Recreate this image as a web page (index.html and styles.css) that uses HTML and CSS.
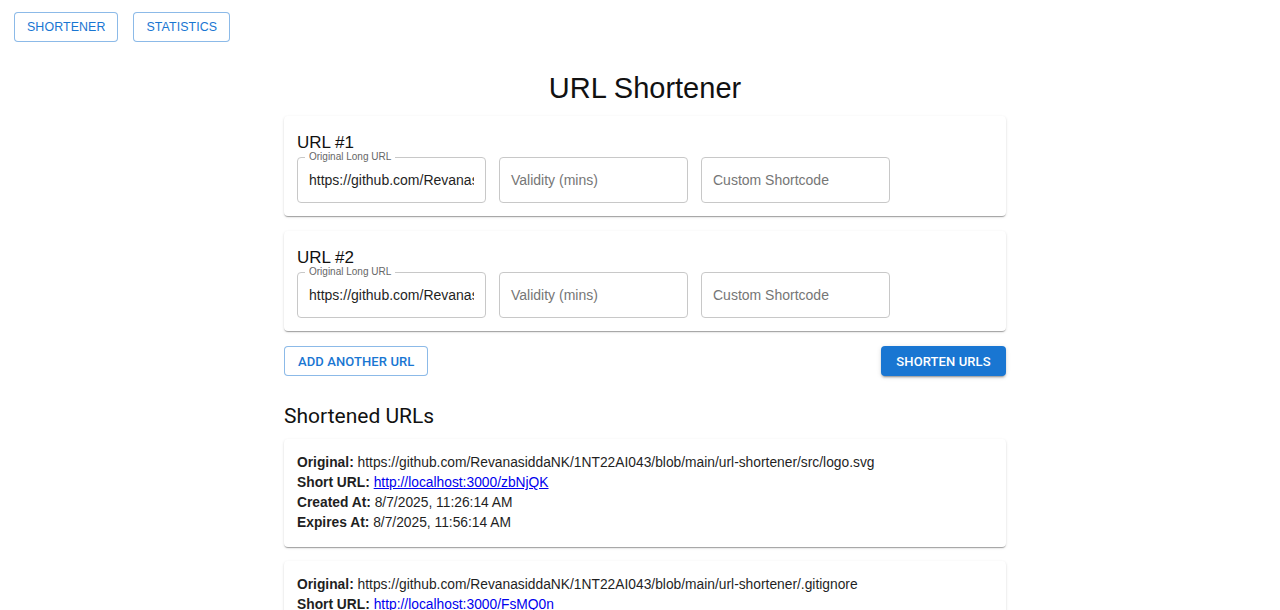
FILE: index.html
```html
<!DOCTYPE html>
<html lang="en">
<head>
<meta charset="utf-8">
<title>URL Shortener</title>
<link rel="stylesheet" href="styles.css">
</head>
<body>
<nav class="nav">
  <button class="btn btn-outline nav-btn">Shortener</button>
  <button class="btn btn-outline nav-btn">Statistics</button>
</nav>
<main class="container">
  <h1 class="title">URL Shortener</h1>

  <section class="card entry">
    <h2 class="entry-title">URL #1</h2>
    <div class="fields">
      <div class="field filled">
        <span class="field-label">Original Long URL</span>
        <span class="field-value">https://github.com/RevanasiddaNK/1NT22AI043/blob/main/url-shortener/src/logo.svg</span>
      </div>
      <div class="field"><span class="field-placeholder">Validity (mins)</span></div>
      <div class="field"><span class="field-placeholder">Custom Shortcode</span></div>
    </div>
  </section>

  <section class="card entry">
    <h2 class="entry-title">URL #2</h2>
    <div class="fields">
      <div class="field filled">
        <span class="field-label">Original Long URL</span>
        <span class="field-value">https://github.com/RevanasiddaNK/1NT22AI043/blob/main/url-shortener/.gitignore</span>
      </div>
      <div class="field"><span class="field-placeholder">Validity (mins)</span></div>
      <div class="field"><span class="field-placeholder">Custom Shortcode</span></div>
    </div>
  </section>

  <div class="actions">
    <button class="btn btn-outline add-btn">Add another URL</button>
    <button class="btn btn-filled">Shorten URLs</button>
  </div>

  <h2 class="results-title">Shortened URLs</h2>

  <section class="card result">
    <p><b>Original:</b> https://github.com/RevanasiddaNK/1NT22AI043/blob/main/url-shortener/src/logo.svg</p>
    <p><b>Short URL:</b> <a href="#">http://localhost:3000/zbNjQK</a></p>
    <p><b>Created At:</b> 8/7/2025, 11:26:14 AM</p>
    <p><b>Expires At:</b> 8/7/2025, 11:56:14 AM</p>
  </section>

  <section class="card result">
    <p><b>Original:</b> https://github.com/RevanasiddaNK/1NT22AI043/blob/main/url-shortener/.gitignore</p>
    <p><b>Short URL:</b> <a href="#">http://localhost:3000/FsMQ0n</a></p>
    <p><b>Created At:</b> 8/7/2025, 11:26:14 AM</p>
    <p><b>Expires At:</b> 8/7/2025, 11:56:14 AM</p>
  </section>
</main>
</body>
</html>
```

FILE: styles.css
```css
* { box-sizing: border-box; }

html, body {
  margin: 0;
  padding: 0;
  background: #ffffff;
  color: #1f1f1f;
  font-family: "Liberation Sans", Arial, sans-serif;
}

.nav {
  display: flex;
  gap: 15px;
  padding: 12px 14px 0;
}

.btn {
  height: 30px;
  border-radius: 4px;
  font-size: 13px;
  text-transform: uppercase;
  cursor: pointer;
  background: #fff;
  display: inline-flex;
  align-items: center;
  justify-content: center;
}

.btn-outline {
  border: 1px solid rgba(25, 118, 210, 0.5);
  color: #1976d2;
}

.nav-btn {
  font-family: "Liberation Sans", Arial, sans-serif;
  font-size: 12.4px;
  padding: 0 12px;
  letter-spacing: 0.1px;
}

.container {
  width: 722px;
  margin-left: 284px;
}

.title {
  margin: 29px 0 11px;
  text-align: center;
  font-size: 29px;
  line-height: 34px;
  font-weight: 400;
  color: #111;
}

.card {
  background: #fff;
  border-radius: 4px;
  box-shadow: 0 2px 1px -1px rgba(0,0,0,0.2), 0 1px 1px 0 rgba(0,0,0,0.14), 0 1px 3px 0 rgba(0,0,0,0.12);
}

.entry {
  padding: 16px 13px 13px;
  margin-bottom: 15px;
}

.entry-title {
  margin: 0 0 3px;
  font-size: 17px;
  line-height: 22px;
  font-weight: 400;
  color: #111;
}

.fields {
  display: flex;
  gap: 13px;
}

.field {
  position: relative;
  width: 189px;
  height: 46px;
  border: 1px solid #c8c8c8;
  border-radius: 4px;
  padding: 0 11px;
  display: flex;
  align-items: center;
  font-size: 14px;
}

.field-label {
  position: absolute;
  top: -7px;
  left: 7px;
  padding: 0 4px;
  background: #fff;
  font-size: 10px;
  line-height: 12px;
  color: #666;
}

.field-value {
  white-space: nowrap;
  overflow: hidden;
  color: #1f1f1f;
}

.field-placeholder {
  color: #767676;
}

.actions {
  display: flex;
  justify-content: space-between;
  margin-bottom: 27px;
}

.add-btn,
.btn-filled {
  font-family: Roboto, "Liberation Sans", sans-serif;
  font-weight: 500;
  letter-spacing: 0.1px;
  padding: 0 13px;
}

.btn-filled {
  border: none;
  background: #1976d2;
  color: #fff;
  width: 125px;
  box-shadow: 0 3px 1px -2px rgba(0,0,0,0.2), 0 2px 2px 0 rgba(0,0,0,0.14), 0 1px 5px 0 rgba(0,0,0,0.12);
}

.results-title {
  margin: 0 0 9px;
  font-family: Roboto, "Liberation Sans", sans-serif;
  font-size: 21px;
  line-height: 27px;
  font-weight: 400;
  color: #111;
}

.result {
  padding: 14px 13px 14px;
  margin-bottom: 14px;
}

.result p {
  margin: 0;
  font-size: 13.8px;
  line-height: 20px;
  color: #1f1f1f;
}

.result b {
  font-weight: 700;
}

.result a {
  color: #0000ee;
}
```
